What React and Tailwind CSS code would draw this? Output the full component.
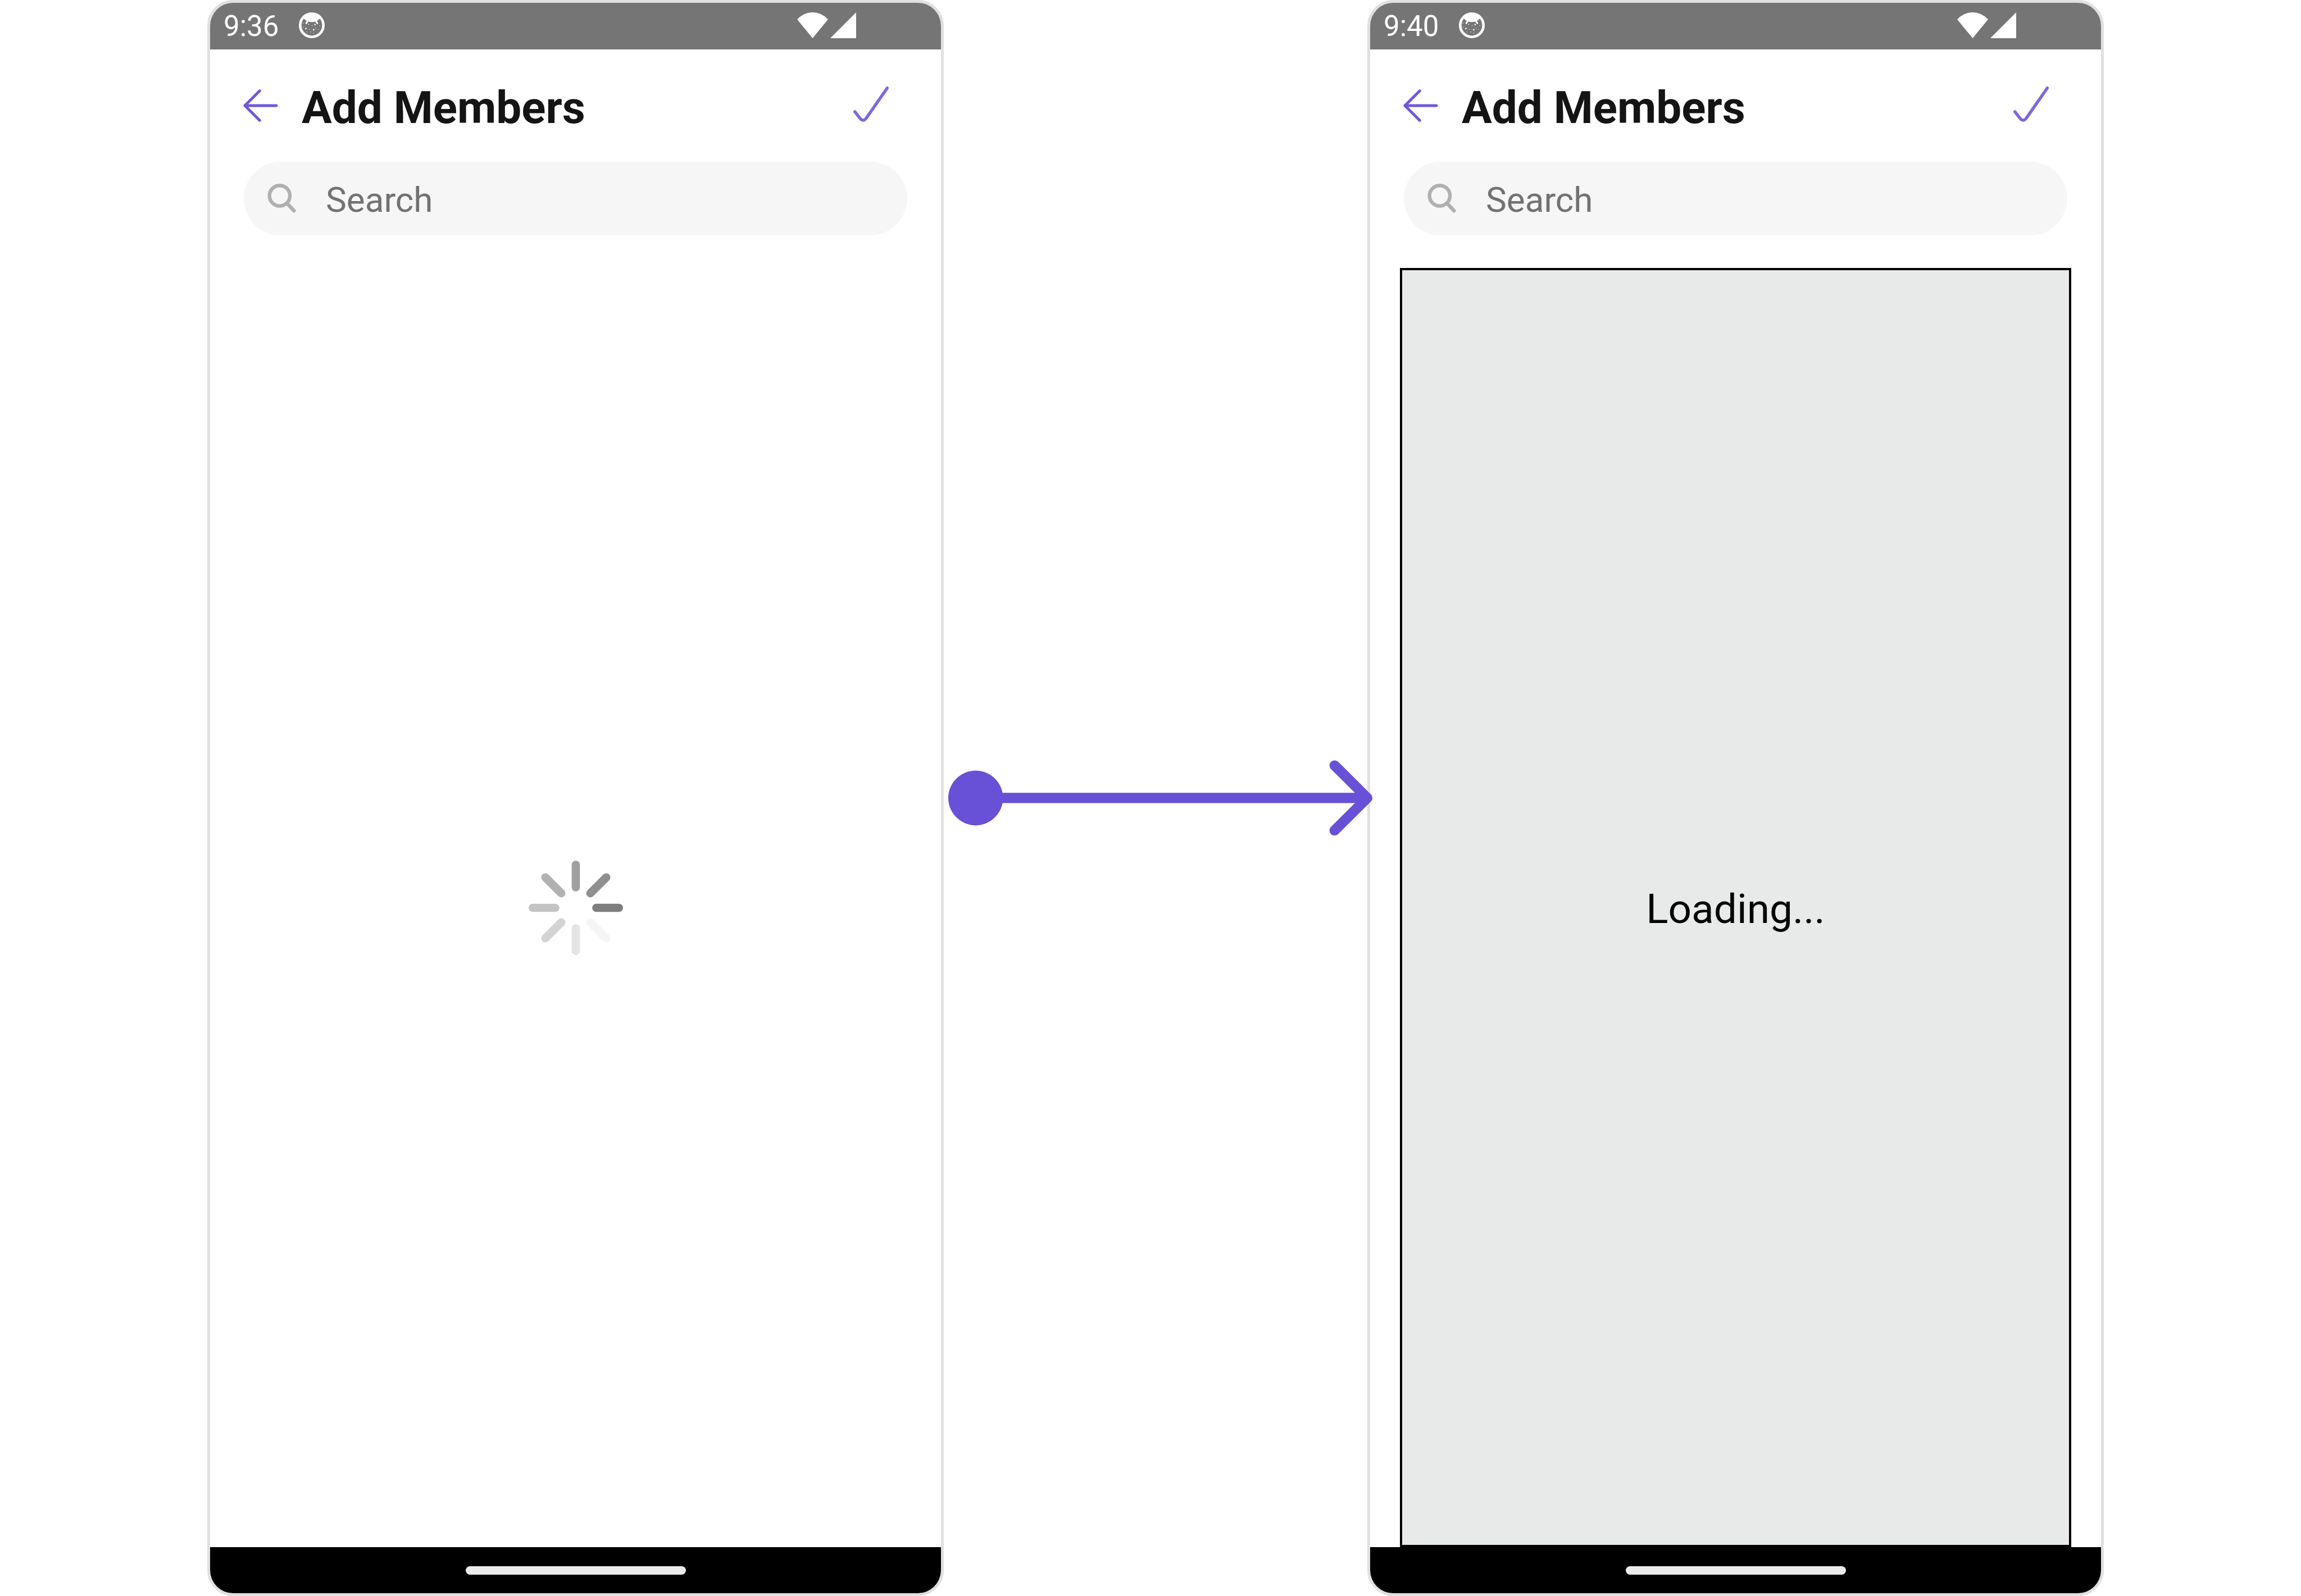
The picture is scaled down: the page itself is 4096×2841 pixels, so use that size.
function FaceIcon() {
  return (
    <svg viewBox="0 0 150 150" className="mb-1 size-[46px]" aria-hidden="true">
      <circle cx="75" cy="75" r="67.5" fill="none" stroke="#fff" strokeWidth="15" />
      <path d="M27 33 C34 42 39 48 50 51 Q75 61 100 51 C111 48 116 42 123 33 A64 64 0 0 0 27 33Z" fill="#fff" />
      <path d="M51 50 L43 63 M99 50 L107 63" stroke="#fff" strokeWidth="10" strokeLinecap="round" />
      <g fill="#fff">
        <rect x="90" y="67" width="8" height="8" />
        <rect x="37" y="90" width="8" height="8" />
        <rect x="82" y="97" width="8" height="8" />
        <rect x="53" y="67" width="5" height="5" />
        <rect x="22" y="60" width="4" height="4" />
        <rect x="23" y="83" width="4" height="4" />
        <rect x="75" y="75" width="4" height="4" />
        <rect x="97" y="89" width="4" height="4" />
        <rect x="60" y="97" width="4" height="4" />
        <rect x="112" y="97" width="4" height="4" />
        <rect x="120" y="75" width="4" height="4" />
        <rect x="45" y="112" width="4" height="4" />
        <rect x="68" y="112" width="4" height="4" />
        <rect x="83" y="119" width="4" height="4" />
      </g>
    </svg>
  );
}

function StatusBar({ time }) {
  return (
    <div className="flex h-[83px] shrink-0 items-center bg-[#757575] pl-6 pr-[151px]">
      <span className="text-[51px] leading-[60px] text-white">{time}</span>
      <div className="ml-9 flex grow items-center">
        <FaceIcon />
      </div>
      <div className="mb-1 flex gap-1">
        <svg viewBox="0 0 60 50" className="h-[46px] w-[55px]" fill="#fff" aria-hidden="true">
          <path d="M0 13.5 Q13 0 30 0 Q47 0 60 13.5 L30 50Z" />
        </svg>
        <svg viewBox="0 0 50 50" className="size-[46px]" fill="#fff" aria-hidden="true">
          <path d="M50 0V50H0Z" />
        </svg>
      </div>
    </div>
  );
}

function Header() {
  return (
    <header className="flex h-[200px] shrink-0 items-center pl-[59px] pr-[92px]">
      <button type="button" aria-label="Back">
        <svg viewBox="0 0 68 64" className="h-[58px] w-[62px]" fill="none" stroke="#6f59d8" strokeWidth="5.5" strokeLinecap="round" strokeLinejoin="round" aria-hidden="true">
          <path d="M32 3 L3 32 L32 61 M3 32H65" />
        </svg>
      </button>
      <h1 className="ml-[42px] grow pt-2 text-[80px] leading-[96px] font-bold text-[#141414]">Add Members</h1>
      <button type="button" aria-label="Done" className="mb-1">
        <svg viewBox="0 0 70 72" className="h-[66px] w-[64px]" fill="none" stroke="#7d69dd" strokeWidth="6" strokeLinecap="round" strokeLinejoin="round" aria-hidden="true">
          <path d="M3 50 L13 63 Q19 70 25 63 L66 4" />
        </svg>
      </button>
    </header>
  );
}

function SearchBar() {
  return (
    <label className="mx-[60px] flex h-[131px] shrink-0 items-center rounded-full bg-[#f6f6f6] pl-[42px] pr-10">
      <svg viewBox="0 0 56 58" className="mb-0.5 h-[53px] w-[51px] shrink-0" fill="none" stroke="#b0b0b0" strokeWidth="7" strokeLinecap="round" aria-hidden="true">
        <circle cx="24" cy="24.5" r="20" />
        <path d="M39 40 L52 54" />
      </svg>
      <input
        type="search"
        aria-label="Search"
        placeholder="Search"
        className="ml-[53px] min-w-0 grow bg-transparent pt-1 text-[62px] leading-[72px] text-[#141414] outline-none placeholder:text-[#727272]"
      />
    </label>
  );
}

const spokes = [
  [0, "#7e7e7e"],
  [45, "#f5f5f5"],
  [90, "#e4e4e4"],
  [135, "#d3d3d3"],
  [180, "#c3c3c3"],
  [225, "#b1b1b1"],
  [270, "#a0a0a0"],
  [315, "#8f8f8f"],
];

function Spinner() {
  return (
    <svg viewBox="-92 -92 184 184" className="size-[168px]" role="img" aria-label="Loading">
      {spokes.map(([angle, color]) => (
        <line key={angle} x1="40" x2="84" y1="0" y2="0" stroke={color} strokeWidth="16" strokeLinecap="round" transform={`rotate(${angle})`} />
      ))}
    </svg>
  );
}

function Phone({ time, children }) {
  return (
    <section className="flex min-w-0 flex-col overflow-hidden rounded-[46px] border-5 border-[#e0e0e0] bg-white">
      <StatusBar time={time} />
      <Header />
      <SearchBar />
      <main className="mx-[53px] mt-[58px] flex grow flex-col">{children}</main>
      <div className="flex h-[82px] shrink-0 items-center justify-center bg-black">
        <div className="h-[15px] w-[392px] rounded-full bg-[#ebebeb]" />
      </div>
    </section>
  );
}

export default function App() {
  return (
    <div className="grid min-h-screen grid-cols-[369fr_1311fr_754fr_1311fr_351fr] bg-white font-[Roboto,sans-serif]">
      <div />
      <Phone time="9:36">
        <div className="flex grow items-center justify-center">
          <Spinner />
        </div>
      </Phone>
      <div className="z-10 ml-2 -mr-[10px] flex items-center">
        <svg viewBox="0 0 830 148" className="h-auto w-full" fill="none" stroke="#6851d6" strokeWidth="20" strokeLinecap="round" strokeLinejoin="round" aria-hidden="true">
          <circle cx="53.500" cy="74" r="53.500" fill="#6851d6" stroke="none" />
          <path d="M54 74H818 M755 10.500 L819 74 L755 137.500" />
        </svg>
      </div>
      <Phone time="9:40">
        <div className="flex grow items-center justify-center border-4 border-black bg-[#e8eae9]">
          <p className="pt-1 text-[73px] leading-[88px] text-black">Loading...</p>
        </div>
      </Phone>
      <div />
    </div>
  );
}
